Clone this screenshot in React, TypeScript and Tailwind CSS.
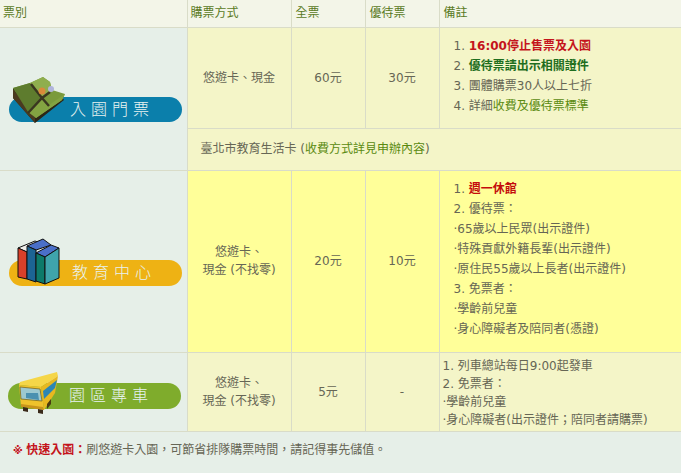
import React from "react";

function MapIcon() {
  return (
    <svg className="absolute left-[3px] top-[-21px]" width="56" height="50" viewBox="0 0 56 50">
      <path d="M1 12 L1 22 L23 47 L52 24 L50 21 L24 40 Z" fill="#2c2616" />
      <path d="M1 22 L23 47 L23 41 L1 13 Z" fill="#4a3a20" />
      <path d="M1 12 L18 7 L31 1 L38 6 L40 14 L53 18 L50 24 L24 42 Z" fill="#7a9a3c" />
      <path d="M1 12 L18 7 L30 22 L16 36 Z" fill="#5e7c2e" />
      <path d="M18 7 L31 1 L38 6 L40 14 L30 22 Z" fill="#8fae4e" />
      <path d="M37 29 L53 18 L50 24 L24 42 L16 36 L30 22 Z" fill="#83a342" />
      <path d="M19 8 L30 22 L37 30 M16 37 L30 22 L38 16" fill="none" stroke="#3a3620" strokeWidth="2.4" />
      <circle cx="30" cy="15" r="3.5" fill="#d98a3a" />
      <circle cx="39" cy="13" r="3" fill="#b0b4dc" />
    </svg>
  );
}

function BooksIcon() {
  return (
    <svg className="absolute left-[8px] top-[-22px]" width="44" height="48" viewBox="0 0 44 48" stroke="#111" strokeWidth="1" strokeLinejoin="round">
      <path d="M1 10 L18 3 L26 6 L10 14 Z" fill="#eeeeea" />
      <path d="M1 10 L10 14 L10 41 L1 39 Z" fill="#d8402a" />
      <path d="M10 8 L26 1 L34 7 L19 12 Z" fill="#4a6fc8" />
      <path d="M10 8 L19 12 L19 44 L10 41 Z" fill="#1c6494" />
      <path d="M19 15 L34 7 L42 10 L28 19 Z" fill="#4a6fc8" />
      <path d="M19 15 L28 19 L28 46 L19 43 Z" fill="#0d7a6a" />
      <path d="M28 19 L42 10 L42 40 L28 46 Z" fill="#3fa4ac" />
    </svg>
  );
}

function BusIcon() {
  return (
    <svg className="absolute left-[9px] top-[-12px]" width="44" height="44" viewBox="0 0 44 44">
      <path d="M3 11 L40 1 L41 5 L24 16 L2 14 Z" fill="#f5d648" />
      <path d="M24 16 L41 5 L38 22 L27 39 Z" fill="#e8b820" />
      <path d="M26 20 L40 9 L38 17 L27 28 Z" fill="#2c86b4" />
      <path d="M2 14 L24 16 L27 39 L4 35 Z" fill="#efc22c" />
      <path d="M3 16 L23 18 L25 30 L4 28 Z" fill="#9cc8d0" stroke="#7a6a20" strokeWidth="0.8" />
      <path d="M9 22 L21 22 L22 29 L9 27 Z" fill="#4a90b0" />
      <path d="M4 33 L26 36 L27 39 L4 36 Z" fill="#c8941c" />
      <path d="M6 36 L11 37 L11 41 L6 40 Z" fill="#3a2a1a" />
      <path d="M21 38 L26 39 L26 43 L21 42 Z" fill="#3a2a1a" />
      <path d="M30 33 L34 28 L34 33 L30 38 Z" fill="#4a3a10" />
    </svg>
  );
}

function Pill({ className, labelClass, label, icon }: { className: string; labelClass: string; label: string; icon: React.ReactNode }) {
  return (
    <div className={`relative w-[173px] rounded-[13px] ${className}`}>
      {icon}
      <span className={`absolute top-[4px] whitespace-nowrap text-[16px] leading-[18px] font-light tracking-[5px] text-[#e8f3f0] ${labelClass}`}>{label}</span>
    </div>
  );
}

const bd = "border-b border-r border-[#d9dcc8]";

export default function App() {
  return (
    <div
      className="h-[473px] w-[681px] overflow-hidden bg-[#e6efe8] text-[12px] text-[#666655]"
      style={{ fontFamily: '"DejaVu Sans", "Noto Sans CJK TC", sans-serif' }}
    >
      <table className="w-[681px] table-fixed border-collapse">
        <colgroup>
          <col className="w-[187px]" />
          <col className="w-[104px]" />
          <col className="w-[74px]" />
          <col className="w-[74px]" />
          <col className="w-[242px]" />
        </colgroup>
        <thead>
          <tr className="h-[27px] bg-[#f3f5e8] text-[#5a7a1e]">
            <th className="border-b border-r border-[#d9dcc8] pl-[3px] text-left font-normal">票別</th>
            <th className="border-b border-r border-[#d9dcc8] pl-[3px] text-left font-normal">購票方式</th>
            <th className="border-b border-r border-[#d9dcc8] pl-[4px] text-left font-normal">全票</th>
            <th className="border-b border-r border-[#d9dcc8] pl-[4px] text-left font-normal">優待票</th>
            <th className="border-b border-[#d9dcc8] pl-[4px] text-left font-normal">備註</th>
          </tr>
        </thead>
        <tbody>
          <tr className="h-[101px] bg-[#f4f5c8]">
            <td rowSpan={2} className="border-b border-r border-[#d9dcc8] bg-[#e6efe8] pt-[22px] pl-[9px] align-middle">
              <Pill className="h-[25px] bg-[#0b7fab]" labelClass="left-[61px]" label="入園門票" icon={<MapIcon />} />
            </td>
            <td className={`${bd} text-center`}>悠遊卡、現金</td>
            <td className={`${bd} text-center`}>60元</td>
            <td className={`${bd} text-center`}>30元</td>
            <td className="border-b border-[#d9dcc8] pl-[14px] align-top pt-[8px] leading-[20px]">
              <div>1. <b className="font-bold text-[#c4141c]">16:00停止售票及入園</b></div>
              <div>2. <b className="font-bold text-[#1e6e1e]">優待票請出示相關證件</b></div>
              <div>3. 團體購票30人以上七折</div>
              <div>4. 詳細<span className="text-[#5a8a10]">收費及優待票標準</span></div>
            </td>
          </tr>
          <tr className="h-[42px] bg-[#f4f5c8]">
            <td colSpan={4} className="border-b border-[#d9dcc8] pl-[13px]">
              臺北市教育生活卡 (<span className="text-[#5a8a10]">收費方式詳見申辦內容</span>)
            </td>
          </tr>
          <tr className="h-[182px] bg-[#ffff99]">
            <td className="border-b border-r border-[#d9dcc8] bg-[#e6efe8] pt-[24px] pl-[9px] align-middle">
              <Pill className="h-[26px] bg-[#eeb214]" labelClass="left-[63px]" label="教育中心" icon={<BooksIcon />} />
            </td>
            <td className={`${bd} text-center leading-[18px]`}>悠遊卡、<br />現金 (不找零)</td>
            <td className={`${bd} text-center`}>20元</td>
            <td className={`${bd} text-center`}>10元</td>
            <td className="border-b border-[#d9dcc8] pl-[14px] align-top pt-[8px] leading-[20px]">
              <div>1. <b className="font-bold text-[#c40c0c]">週一休館</b></div>
              <div>2. 優待票：</div>
              <div>‧65歲以上民眾(出示證件)</div>
              <div>‧特殊貢獻外籍長輩(出示證件)</div>
              <div>‧原住民55歲以上長者(出示證件)</div>
              <div>3. 免票者：</div>
              <div>‧學齡前兒童</div>
              <div>‧身心障礙者及陪同者(憑證)</div>
            </td>
          </tr>
          <tr className="h-[79px] bg-[#f4f5c8]">
            <td className="border-b border-r border-[#d9dcc8] bg-[#e6efe8] pt-[8px] pl-[8px] align-middle">
              <Pill className="h-[26px] bg-[#7fac2c]" labelClass="left-[61px]" label="園區專車" icon={<BusIcon />} />
            </td>
            <td className={`${bd} text-center leading-[18px]`}>悠遊卡、<br />現金 (不找零)</td>
            <td className={`${bd} text-center`}>5元</td>
            <td className={`${bd} text-center`}>-</td>
            <td className="border-b border-[#d9dcc8] pl-[3px] pt-[2px] leading-[18px]">
              <div>1. 列車總站每日9:00起發車</div>
              <div>2. 免票者：</div>
              <div>‧學齡前兒童</div>
              <div>‧身心障礙者(出示證件；陪同者請購票)</div>
            </td>
          </tr>
        </tbody>
      </table>
      <p className="pl-[13px] pt-[9px] text-[#666655]">
        <b className="font-bold text-[#c4141c]"><span className="text-[10px]">※ </span>快速入園：</b>刷悠遊卡入園，可節省排隊購票時間，請記得事先儲值。
      </p>
    </div>
  );
}
